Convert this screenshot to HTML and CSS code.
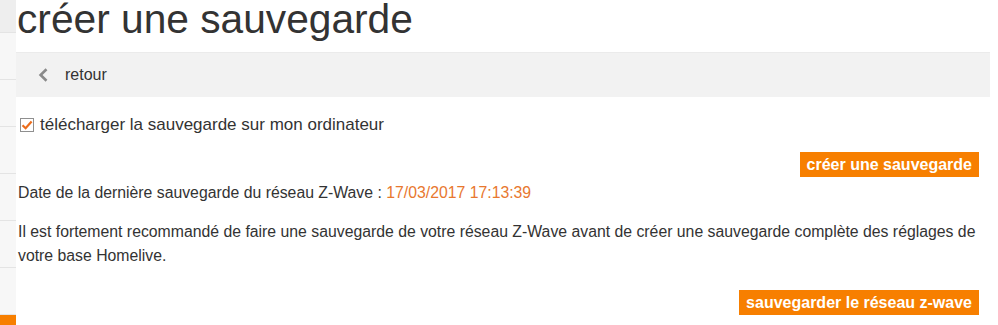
FILE: index.html
```html
<!DOCTYPE html>
<html lang="fr">
<head>
    <meta charset="UTF-8">
    <title>créer une sauvegarde</title>
    <link rel="stylesheet" href="styles.css">
</head>
<body>
<div class="layout">
    <ul class="sidebar">
        <li class="active-top"></li>
        <li></li>
        <li></li>
        <li></li>
        <li></li>
        <li></li>
        <li></li>
        <li class="current"></li>
    </ul>

    <div class="main">
        <h1 class="title">créer une sauvegarde</h1>

        <div class="toolbar">
            <a href="javascript:" class="back">
                <svg class="chevron" width="10" height="14" viewBox="0 0 10 14">
                    <path d="M8.5 1.2 L2.6 7 L8.5 12.8" fill="none" stroke="#8a8a8a" stroke-width="2.6"/>
                </svg>
                <span>retour</span>
            </a>
        </div>

        <div class="content">
            <label class="check-row">
                <span class="check">
                    <svg width="12" height="12" viewBox="0 0 12 12">
                        <path d="M1.5 6.2 L4.6 9.2 L10.6 2.4" fill="none" stroke="#ec6d1c" stroke-width="2.2"/>
                    </svg>
                </span>
                <span>télécharger la sauvegarde sur mon ordinateur</span>
            </label>

            <div class="actions">
                <a href="javascript:" class="btn">créer une sauvegarde</a>
            </div>

            <p class="last-backup">Date de la dernière sauvegarde du réseau Z-Wave : <span class="date">17/03/2017 17:13:39</span></p>

            <p class="notice">Il est fortement recommandé de faire une sauvegarde de votre réseau Z-Wave avant de créer une sauvegarde complète des réglages de votre base Homelive.</p>

            <div class="actions actions-bottom">
                <a href="javascript:" class="btn">sauvegarder le réseau z-wave</a>
            </div>
        </div>
    </div>
</div>
</body>
</html>
```

FILE: styles.css
```css
*{
    margin: 0;
    padding: 0;
    box-sizing: border-box;
}
a{
    text-decoration: none;
}
body{
    font-family: "Liberation Sans", Arial, sans-serif;
    color: #333;
    background: #fff;
    overflow: hidden;
}
.layout{
    display: flex;
    height: 325px;
}

/* colonne de gauche */
.sidebar{
    list-style: none;
    width: 16px;
    flex-shrink: 0;
    display: flex;
    flex-direction: column;
    background: #f7f7f7;
}
.sidebar li{
    height: 47px;
    flex-shrink: 0;
    border-bottom: 1px solid #e4e4e4;
}
.sidebar li.active-top{
    height: 33px;
    background: #eeeeee;
}
.sidebar li.current{
    height: 20px;
    background: #f77f00;
    border: none;
}

.main{
    flex: 1;
    margin-right: 8px;
}
.title{
    font-size: 40.7px;
    line-height: 38px;
    padding-top: 1px;
    margin-top: -1px;
    font-weight: normal;
    color: #333;
    padding-left: 1px;
}
.toolbar{
    margin-top: 14px;
    height: 45px;
    background: #f2f2f2;
    border-top: 1px solid #ebebeb;
    display: flex;
    align-items: center;
    padding-left: 22px;
}
.toolbar .back{
    display: flex;
    align-items: center;
    gap: 17px;
    color: #333;
    font-size: 16px;
}
.toolbar .chevron{
    display: block;
}

.content{
    padding: 0 11px 0 2px;
}
.check-row{
    display: flex;
    align-items: center;
    gap: 6px;
    margin-top: 18px;
    font-size: 17px;
    line-height: 20px;
    cursor: pointer;
}
.check{
    width: 14px;
    height: 14px;
    margin-left: 2px;
    border: 1px solid #8f8f8f;
    background: #fff;
    display: flex;
    align-items: center;
    justify-content: center;
}
.check svg{
    display: block;
}
.actions{
    display: flex;
    justify-content: flex-end;
    margin-top: 17px;
}
.actions-bottom{
    margin-top: 22px;
}
.btn{
    display: inline-block;
    height: 25px;
    line-height: 25px;
    padding: 0 7px;
    background: #f77f00;
    color: #fff;
    font-weight: bold;
    font-size: 16px;
}
.last-backup{
    margin-top: 4px;
    font-size: 15.8px;
    line-height: 24px;
}
.last-backup .date{
    color: #e8782f;
}
.notice{
    margin-top: 15px;
    font-size: 15.8px;
    line-height: 24px;
}
```
